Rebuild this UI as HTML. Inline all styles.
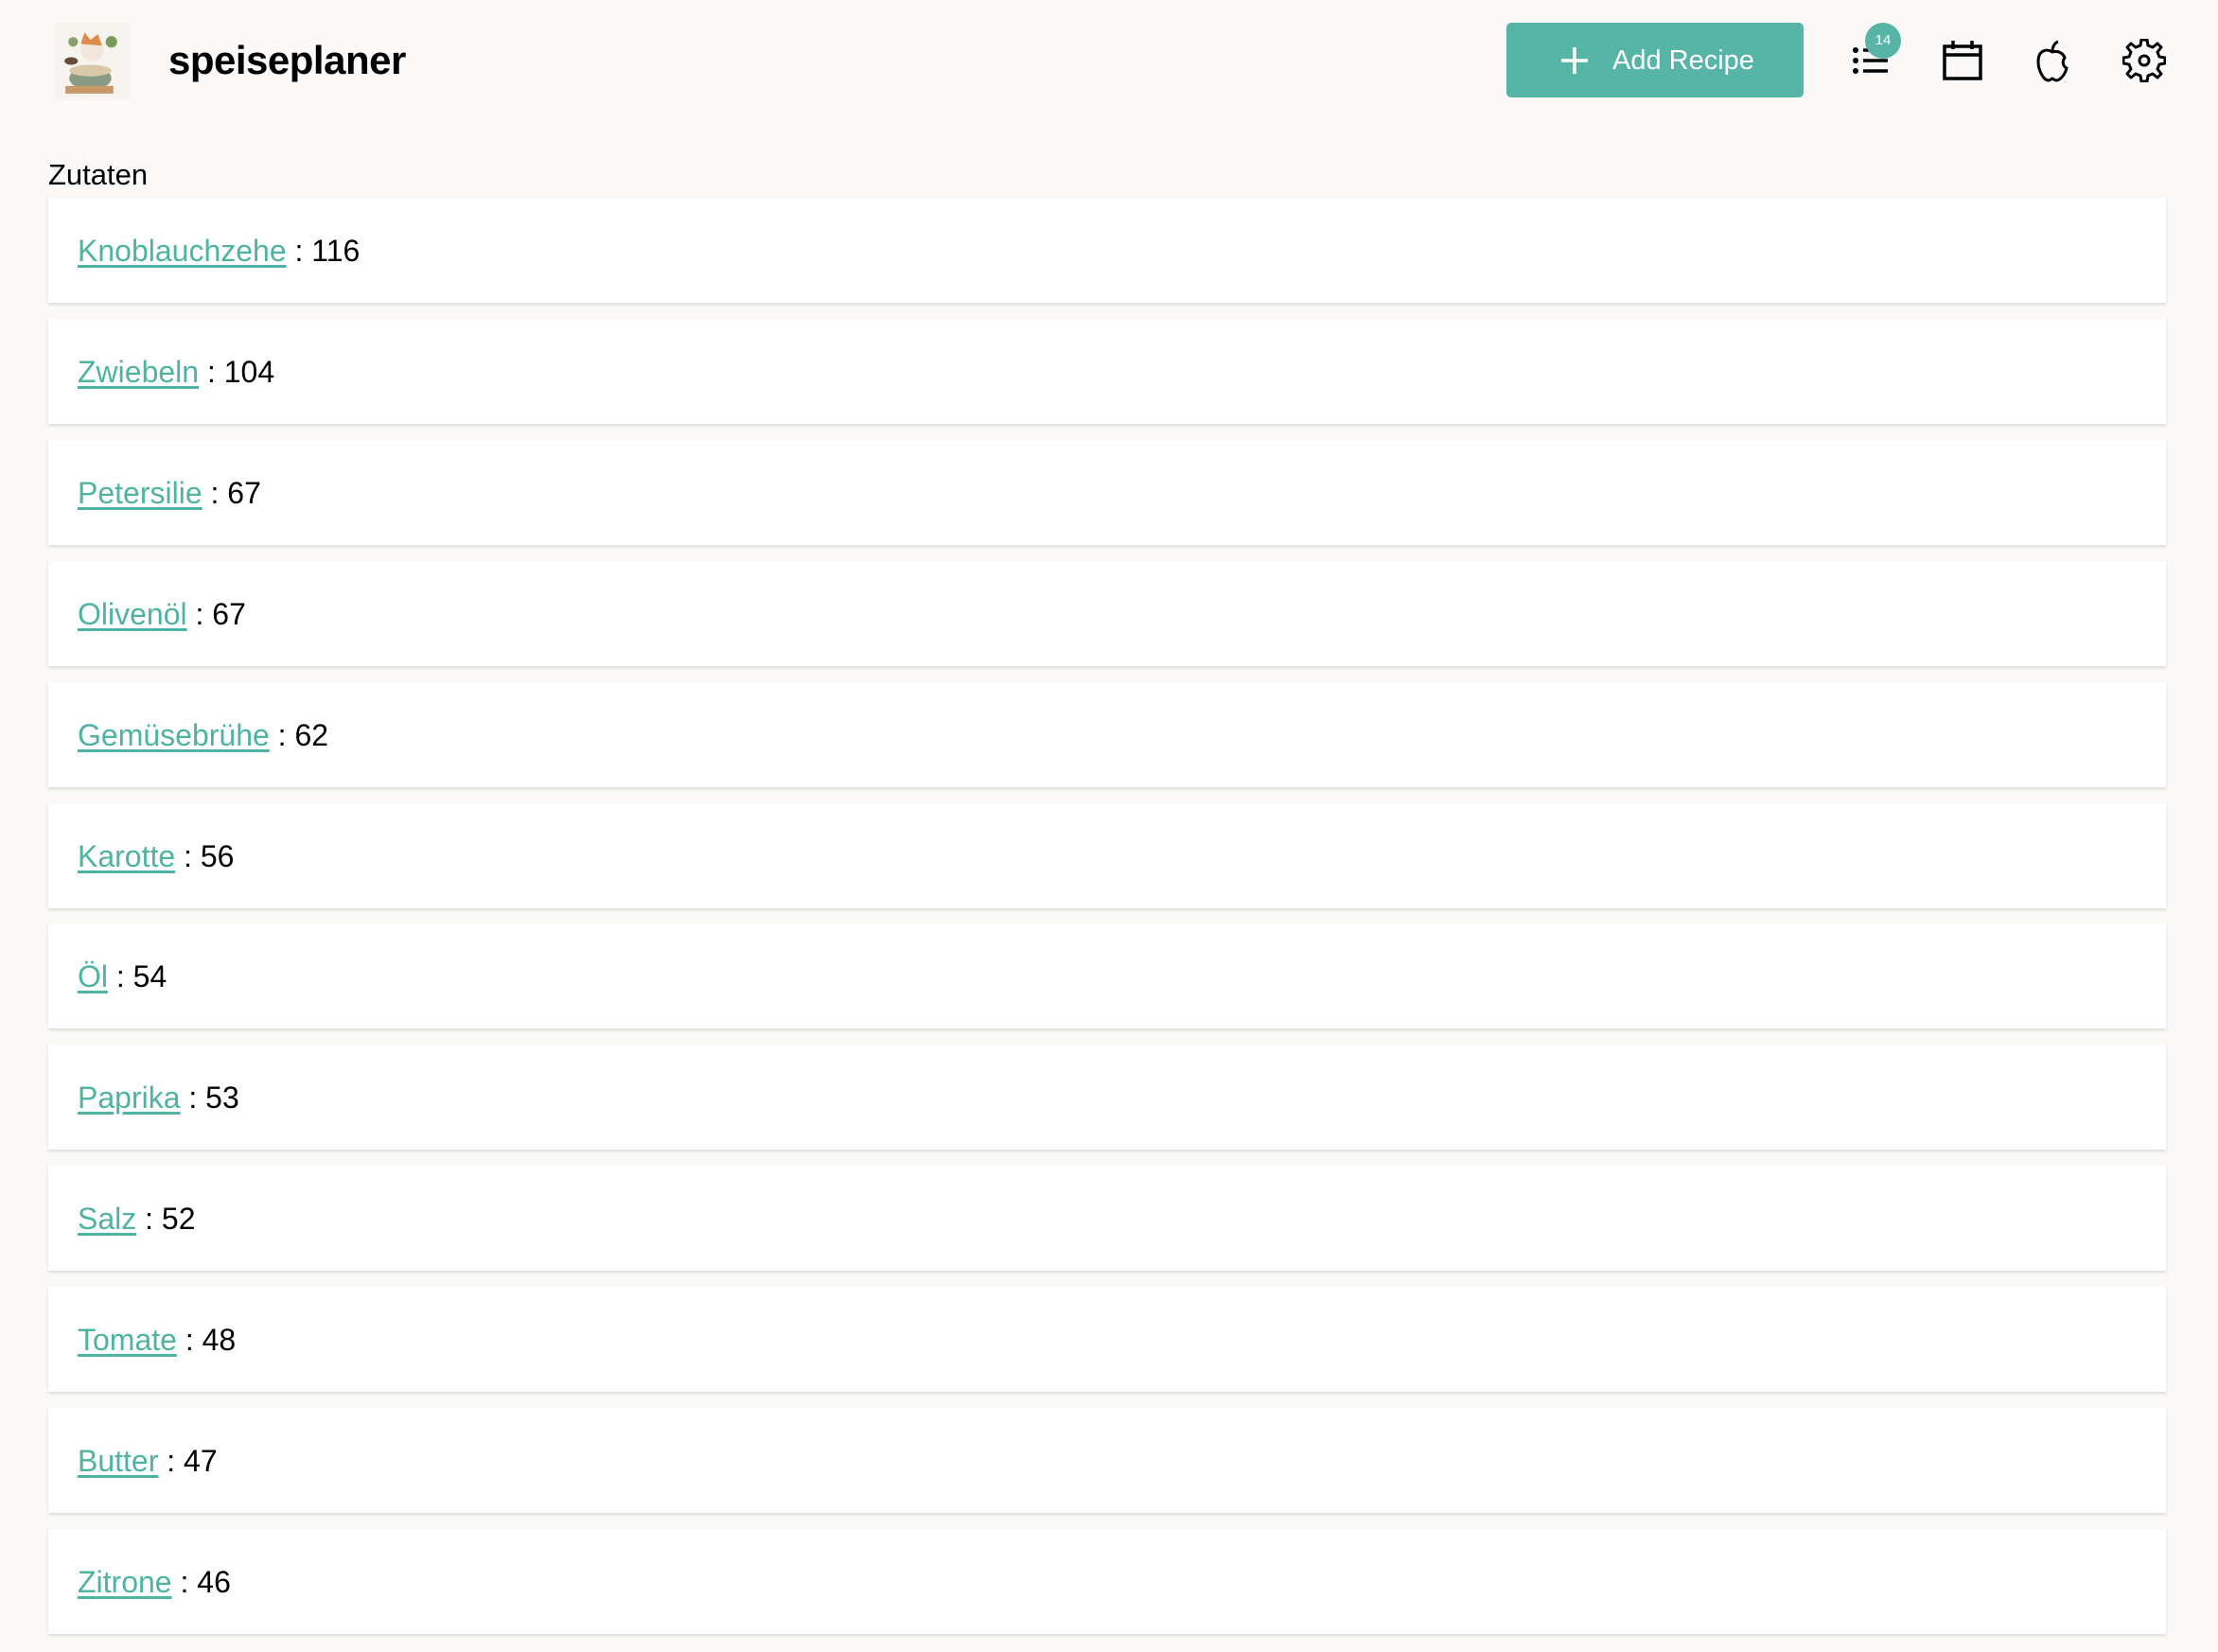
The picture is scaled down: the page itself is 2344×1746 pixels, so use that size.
<!DOCTYPE html>
<html><head><meta charset="utf-8"><style>
html,body{margin:0;padding:0;}
html{overflow:hidden;}
body{width:2344px;height:1746px;background:#faf9f7;font-family:"Liberation Sans",sans-serif;position:relative;overflow:hidden;color:#000;}
.logo{position:absolute;left:57px;top:24px;width:81px;height:81px;}
.title{position:absolute;left:178px;top:40px;font-size:42px;font-weight:bold;letter-spacing:-0.5px;}
.btn{position:absolute;left:1592px;top:24px;width:314px;height:79px;background:#56b5a7;border-radius:5px;color:#fff;font-size:29px;}
.btn span{position:absolute;left:112px;top:24px;}
.icon{position:absolute;top:41px;width:46px;height:46px;}
.badge{position:absolute;left:1971px;top:24px;width:38px;height:38px;border-radius:50%;background:#56b5a7;color:#fff;font-size:15px;text-align:center;line-height:38px;}
.h{position:absolute;left:51px;top:167px;font-size:31px;}
.card{position:absolute;left:51px;width:2238px;height:111px;background:#fff;box-shadow:0 2px 3px rgba(0,0,0,0.12);font-size:32px;}
.card div{position:absolute;left:31px;top:38px;}
a{color:#4fb3a3;text-decoration:underline;text-underline-offset:4px;}
</style></head><body>
<svg class="logo" viewBox="0 0 80 80">
<rect width="80" height="80" fill="#f7f4ef"/>
<ellipse cx="38" cy="58" rx="22" ry="12" fill="#8a9a84"/>
<ellipse cx="38" cy="50" rx="22" ry="6" fill="#d9c9a8"/>
<circle cx="40" cy="28" r="12" fill="#f2e6dc"/>
<path d="M28 22 L32 10 L38 18 L46 12 L50 24 Z" fill="#e08a4a"/>
<circle cx="60" cy="20" r="6" fill="#7a9a5a"/>
<circle cx="20" cy="20" r="5" fill="#8aa06a"/>
<ellipse cx="18" cy="40" rx="7" ry="4" fill="#6b4a3a"/>
<rect x="12" y="66" width="50" height="8" fill="#c89a6a"/>
</svg>
<div class="title">speiseplaner</div>
<div class="btn"><svg style="position:absolute;left:56px;top:24px" width="32" height="32" viewBox="0 0 32 32"><path d="M16 2V30M2 16H30" stroke="#fff" stroke-width="3.5"/></svg><span>Add Recipe</span></div>
<svg class="icon" style="left:1955px" viewBox="0 0 46 46"><circle cx="6" cy="12" r="3"/><circle cx="6" cy="23" r="3"/><circle cx="6" cy="34" r="3"/><path d="M14 12H40M14 23H40M14 34H40" stroke="#000" stroke-width="3.5"/></svg>
<div class="badge">14</div>
<svg class="icon" style="left:2051px" viewBox="0 0 46 46" fill="none" stroke="#000" stroke-width="3.5"><rect x="4" y="8" width="38" height="34"/><path d="M4 17H42M13 2V11M33 2V11"/></svg>
<svg class="icon" style="left:2146px" viewBox="0 0 46 46" fill="none" stroke="#000" stroke-width="3"><path d="M23 14C17 10 8 12 8 24C8 34 14 44 19 44C21 44 22 42 23 42C24 42 25 44 27 44C32 44 37 36 38 31C34 29 33 24 36 20C34 15 29 12 23 14Z"/><path d="M23 13C23 8 26 4 29 3" /></svg>
<svg class="icon" style="left:2243px" viewBox="0 0 46 46" fill="none" stroke="#000" stroke-width="3" stroke-linejoin="round"><path d="M20 3H26L27 9L32 11L37 7L41 11L37 16L39 21L45 22V28L39 29L37 34L41 39L37 43L32 39L27 41L26 47H20L19 41L14 39L9 43L5 39L9 34L7 29L1 28V22L7 21L9 16L5 11L9 7L14 11L19 9Z" transform="translate(0 -2)"/><circle cx="23" cy="23" r="5"/></svg>
<div class="h">Zutaten</div>
<div class="card" style="top:209px"><div><a>Knoblauchzehe</a> : 116</div></div>
<div class="card" style="top:337px"><div><a>Zwiebeln</a> : 104</div></div>
<div class="card" style="top:465px"><div><a>Petersilie</a> : 67</div></div>
<div class="card" style="top:593px"><div><a>Olivenöl</a> : 67</div></div>
<div class="card" style="top:721px"><div><a>Gemüsebrühe</a> : 62</div></div>
<div class="card" style="top:849px"><div><a>Karotte</a> : 56</div></div>
<div class="card" style="top:976px"><div><a>Öl</a> : 54</div></div>
<div class="card" style="top:1104px"><div><a>Paprika</a> : 53</div></div>
<div class="card" style="top:1232px"><div><a>Salz</a> : 52</div></div>
<div class="card" style="top:1360px"><div><a>Tomate</a> : 48</div></div>
<div class="card" style="top:1488px"><div><a>Butter</a> : 47</div></div>
<div class="card" style="top:1616px"><div><a>Zitrone</a> : 46</div></div>
</body></html>
